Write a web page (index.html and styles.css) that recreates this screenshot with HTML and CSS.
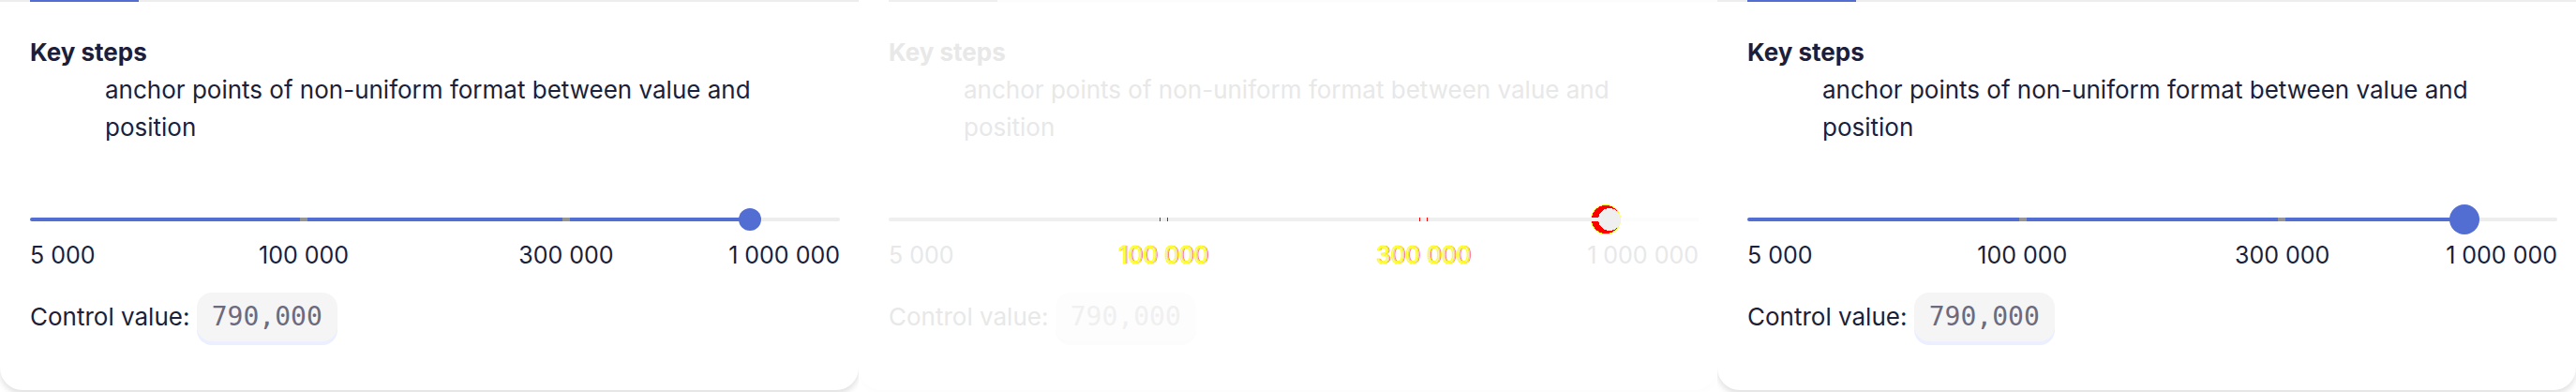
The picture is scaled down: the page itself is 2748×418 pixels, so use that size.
FILE: index.html
```html
<!DOCTYPE html>
<html lang="en">
<head>
<meta charset="utf-8">
<title>Range slider: key steps</title>
<link rel="stylesheet" href="styles.css">
</head>
<body>
<main class="panels">
  <section class="panel">
    <div class="card">
      <div class="tabs"><span class="tab-active"></span></div>
      <div class="content">
        <dl class="about"><dt>Key steps</dt><dd>anchor points of non-uniform format between value and position</dd></dl>
        <input class="range" type="range" min="0" max="100" value="90" aria-label="Amount">
        <div class="ticks"><span>5 000</span><span class="key">100 000</span><span class="key">300 000</span><span>1 000 000</span></div>
        <p class="value">Control value: <code>790,000</code></p>
      </div>
    </div>
  </section>
  <section class="panel diff">
    <div class="card">
      <div class="tabs"><span class="tab-active"></span></div>
      <div class="content">
        <dl class="about"><dt>Key steps</dt><dd>anchor points of non-uniform format between value and position</dd></dl>
        <input class="range" type="range" min="0" max="100" value="90" aria-label="Amount, changes">
        <div class="ticks"><span>5 000</span><span class="key">100 000</span><span class="key">300 000</span><span>1 000 000</span></div>
        <p class="value">Control value: <code>790,000</code></p>
      </div>
    </div>
  </section>
  <section class="panel large">
    <div class="card">
      <div class="tabs"><span class="tab-active"></span></div>
      <div class="content">
        <dl class="about"><dt>Key steps</dt><dd>anchor points of non-uniform format between value and position</dd></dl>
        <input class="range" type="range" min="0" max="100" value="90" aria-label="Amount, large">
        <div class="ticks"><span>5 000</span><span class="key">100 000</span><span class="key">300 000</span><span>1 000 000</span></div>
        <p class="value">Control value: <code>790,000</code></p>
      </div>
    </div>
  </section>
</main>
</body>
</html>
```

FILE: styles.css
```css
* { box-sizing: border-box; }
body {
  margin: 0;
  background: #fff;
  font: 26px/40px Inter, "Liberation Sans", sans-serif;
}
.panels {
  display: grid;
  grid-template-columns: repeat(3, minmax(0, 1fr));
}
.panel {
  --thumb: 24px;
  --text: #1b1f3b;
  --fill: #526ed3;
  --rest: #ededed;
  --line: #ededed;
  --shadow: rgba(0, 0, 0, .12);
  --tick: linear-gradient(#959595, #959595);
  --tick-width: 8px;
  overflow: hidden;
  padding-bottom: 2px;
  color: var(--text);
}
.large { --thumb: 32px; }
.diff {
  --thumb: 32px;
  --text: #e8e8e8;
  --fill: #efefef;
  --rest: #fcfcfc;
  --line: #fcfcfc;
  --shadow: rgba(0, 0, 0, .01);
  --tick: linear-gradient(90deg, red 1px, #efefef 1px 8px, red 8px);
  --tick-width: 9px;
}
.card {
  border-radius: 0 0 24px 24px;
  background: #fff;
  box-shadow: 0 4px 6px var(--shadow);
}
.tabs {
  display: flex;
  padding-left: 32px;
  background: var(--line);
}
.diff .tabs { background: linear-gradient(90deg, #fff 32px, var(--line) 32px); }
.tab-active {
  width: 116px;
  height: 2px;
  background: var(--fill);
}
.content { padding: 34px 20px 50px 32px; }
.about { margin: 0 0 62px; }
.about dt { font-weight: 700; }
.about dd { margin: 0 60px 0 80px; }
.range {
  display: block;
  width: 100%;
  height: 32px;
  margin: 0;
  background: none;
  appearance: none;
}
.range::-webkit-slider-runnable-track {
  height: 4px;
  border-radius: 2px;
  background:
    var(--tick) calc(33.333% + var(--thumb) / 6 - 1px) 0 / var(--tick-width) 4px no-repeat,
    var(--tick) calc(66.667% - var(--thumb) / 6 + 1px) 0 / var(--tick-width) 4px no-repeat,
    linear-gradient(90deg, var(--fill) 88%, var(--rest) 88%);
}
.range::-webkit-slider-thumb {
  width: var(--thumb);
  height: var(--thumb);
  margin-top: calc(2px - var(--thumb) / 2);
  border: 0;
  border-radius: 50%;
  background: var(--fill);
  appearance: none;
}
.diff .range::-webkit-slider-thumb {
  background:
    linear-gradient(var(--fill), var(--fill)) 0 50% / 12px 4px no-repeat,
    radial-gradient(circle at 20px 16px, var(--fill) 12px, transparent 12px),
    radial-gradient(circle at 16px 16px, red 15px, #ff0 15px);
}
.ticks {
  display: grid;
  grid-template-columns: 1fr calc((100% - var(--thumb)) / 3) calc((100% - var(--thumb)) / 3) 1fr;
  padding-top: 2px;
  font-size: 25px;
  text-align: center;
  white-space: nowrap;
}
.ticks :first-child { text-align: left; }
.ticks :last-child { justify-self: end; }
.diff .key {
  -webkit-text-stroke: 1px #ff0;
  text-shadow: 1px 0 red;
}
.value { margin: 18px 0 0; line-height: 56px; }
.value code {
  display: inline-block;
  padding: 0 16px;
  border-radius: 16px;
  background: #f5f5f5;
  box-shadow: 0 4px #ebefff;
  color: #6c6a7c;
  font: 28px/52px "DejaVu Sans Mono", monospace;
}
.diff code {
  background: #fdfdfd;
  box-shadow: 0 4px #fcfcfc;
  color: #f0f0f0;
}
```
